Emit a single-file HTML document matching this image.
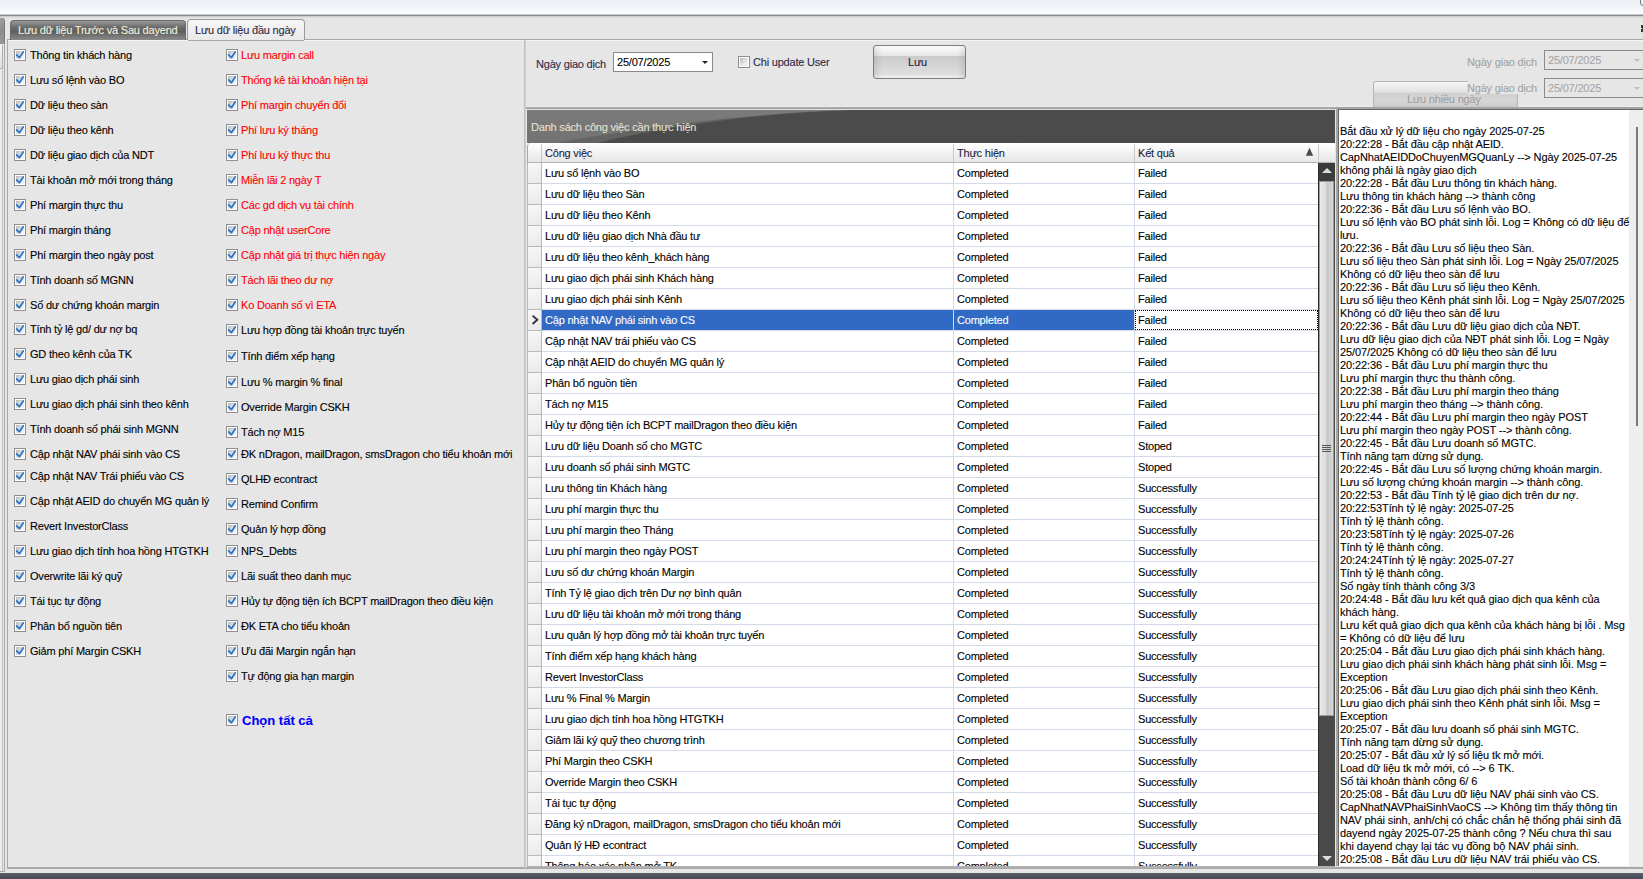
<!DOCTYPE html><html><head><meta charset="utf-8"><style>
*{margin:0;padding:0;box-sizing:border-box}
html,body{width:1643px;height:879px;overflow:hidden;background:#e6e6e6;font-family:"Liberation Sans", sans-serif;font-size:11px;color:#000;position:relative}
div{position:absolute}
.t{white-space:nowrap;line-height:13px;letter-spacing:-0.2px;-webkit-text-stroke:0.1px}
.cb{width:12px;height:12px}
.red{color:#ff0000}
.g{white-space:nowrap;line-height:13px;letter-spacing:-0.2px;color:#000;-webkit-text-stroke:0.1px}
</style></head><body><svg width="0" height="0" style="position:absolute"><defs><linearGradient id="cbg" x1="0" y1="0" x2="1" y2="1"><stop offset="0" stop-color="#b9b9b9"/><stop offset="0.6" stop-color="#e9e9e9"/><stop offset="1" stop-color="#f6f6f6"/></linearGradient></defs></svg>
<div style="left:0;top:0;width:1643px;height:14px;background:linear-gradient(#edf1f7,#f2f5f8 60%,#fdfdfe)"></div>
<div style="left:0;top:14px;width:1643px;height:1px;background:#c3cad4"></div>
<div style="left:0;top:15px;width:1643px;height:1px;background:#898989"></div>
<div style="left:0;top:16px;width:1643px;height:1px;background:#cdcdcd"></div>
<div style="left:0;top:17px;width:1643px;height:1px;background:#dedede"></div>
<div style="left:0;top:18px;width:5px;height:26px;border-radius:0 3px 0 0;background:linear-gradient(#a0a0a0,#8c8c8c 45%,#979797);border-right:1px solid #7a7a7a"></div>
<div style="left:0;top:44px;width:5px;height:828px;border-right:1px solid #a9a9a9;border-bottom:1px solid #a9a9a9"></div>
<div style="left:0;top:45px;width:3px;height:24px;background:linear-gradient(#f6f6f6,#dedede);border-right:1px solid #b0b0b0;border-bottom:1px solid #b0b0b0"></div>
<div style="left:0;top:70px;width:3px;height:801px;background:#ececec;border-right:1px solid #c0c0c0"></div>
<div style="left:7px;top:39px;width:1636px;height:830px;border-left:1px solid #a7a7a7;border-top:1px solid #a7a7a7;border-bottom:2px solid #a9a9a9"></div>
<div style="left:8px;top:40px;width:1635px;height:1px;background:#f4f4f4"></div>
<div style="left:10px;top:20px;width:176px;height:20px;border-radius:4px 4px 0 0;background:linear-gradient(#9a9a9a,#6e6e6e 30%,#5e5e5e 55%,#8a8a8a);border:1px solid #6a6a6a;border-bottom:none"></div>
<div class="t" style="left:18px;top:24px;color:#f4f1dc">Lưu dữ liệu Trước và Sau dayend</div>
<div style="left:187px;top:19px;width:118px;height:21px;border-radius:4px 4px 0 0;background:linear-gradient(#f6f6f6,#e9e9e9);border:1px solid #9a9a9a;border-bottom:none"></div>
<div style="left:188px;top:40px;width:116px;height:1px;background:#a8a8a8"></div>
<div class="t" style="left:195px;top:24px;color:#2a2a44">Lưu dữ liệu đầu ngày</div>
<div class="cb" style="left:14px;top:49px"><svg width="12" height="12" viewBox="0 0 12 12" style="position:absolute;left:0;top:0"><rect x="0.5" y="0.5" width="11" height="11" fill="#ffffff" stroke="#8e8e8e"/><rect x="2" y="2" width="8" height="8" fill="url(#cbg)"/><path d="M2.7 6 L5.4 8.7 L9.2 3" fill="none" stroke="#2d76c6" stroke-width="1.8" stroke-linecap="round" stroke-linejoin="round"/></svg></div>
<div class="t" style="left:30px;top:49px;">Thông tin khách hàng</div>
<div class="cb" style="left:14px;top:74px"><svg width="12" height="12" viewBox="0 0 12 12" style="position:absolute;left:0;top:0"><rect x="0.5" y="0.5" width="11" height="11" fill="#ffffff" stroke="#8e8e8e"/><rect x="2" y="2" width="8" height="8" fill="url(#cbg)"/><path d="M2.7 6 L5.4 8.7 L9.2 3" fill="none" stroke="#2d76c6" stroke-width="1.8" stroke-linecap="round" stroke-linejoin="round"/></svg></div>
<div class="t" style="left:30px;top:74px;">Lưu số lệnh vào BO</div>
<div class="cb" style="left:14px;top:99px"><svg width="12" height="12" viewBox="0 0 12 12" style="position:absolute;left:0;top:0"><rect x="0.5" y="0.5" width="11" height="11" fill="#ffffff" stroke="#8e8e8e"/><rect x="2" y="2" width="8" height="8" fill="url(#cbg)"/><path d="M2.7 6 L5.4 8.7 L9.2 3" fill="none" stroke="#2d76c6" stroke-width="1.8" stroke-linecap="round" stroke-linejoin="round"/></svg></div>
<div class="t" style="left:30px;top:99px;">Dữ liệu theo sàn</div>
<div class="cb" style="left:14px;top:124px"><svg width="12" height="12" viewBox="0 0 12 12" style="position:absolute;left:0;top:0"><rect x="0.5" y="0.5" width="11" height="11" fill="#ffffff" stroke="#8e8e8e"/><rect x="2" y="2" width="8" height="8" fill="url(#cbg)"/><path d="M2.7 6 L5.4 8.7 L9.2 3" fill="none" stroke="#2d76c6" stroke-width="1.8" stroke-linecap="round" stroke-linejoin="round"/></svg></div>
<div class="t" style="left:30px;top:124px;">Dữ liệu theo kênh</div>
<div class="cb" style="left:14px;top:149px"><svg width="12" height="12" viewBox="0 0 12 12" style="position:absolute;left:0;top:0"><rect x="0.5" y="0.5" width="11" height="11" fill="#ffffff" stroke="#8e8e8e"/><rect x="2" y="2" width="8" height="8" fill="url(#cbg)"/><path d="M2.7 6 L5.4 8.7 L9.2 3" fill="none" stroke="#2d76c6" stroke-width="1.8" stroke-linecap="round" stroke-linejoin="round"/></svg></div>
<div class="t" style="left:30px;top:149px;">Dữ liệu giao dịch của NDT</div>
<div class="cb" style="left:14px;top:174px"><svg width="12" height="12" viewBox="0 0 12 12" style="position:absolute;left:0;top:0"><rect x="0.5" y="0.5" width="11" height="11" fill="#ffffff" stroke="#8e8e8e"/><rect x="2" y="2" width="8" height="8" fill="url(#cbg)"/><path d="M2.7 6 L5.4 8.7 L9.2 3" fill="none" stroke="#2d76c6" stroke-width="1.8" stroke-linecap="round" stroke-linejoin="round"/></svg></div>
<div class="t" style="left:30px;top:174px;">Tài khoản mở mới trong tháng</div>
<div class="cb" style="left:14px;top:199px"><svg width="12" height="12" viewBox="0 0 12 12" style="position:absolute;left:0;top:0"><rect x="0.5" y="0.5" width="11" height="11" fill="#ffffff" stroke="#8e8e8e"/><rect x="2" y="2" width="8" height="8" fill="url(#cbg)"/><path d="M2.7 6 L5.4 8.7 L9.2 3" fill="none" stroke="#2d76c6" stroke-width="1.8" stroke-linecap="round" stroke-linejoin="round"/></svg></div>
<div class="t" style="left:30px;top:199px;">Phí margin thực thu</div>
<div class="cb" style="left:14px;top:224px"><svg width="12" height="12" viewBox="0 0 12 12" style="position:absolute;left:0;top:0"><rect x="0.5" y="0.5" width="11" height="11" fill="#ffffff" stroke="#8e8e8e"/><rect x="2" y="2" width="8" height="8" fill="url(#cbg)"/><path d="M2.7 6 L5.4 8.7 L9.2 3" fill="none" stroke="#2d76c6" stroke-width="1.8" stroke-linecap="round" stroke-linejoin="round"/></svg></div>
<div class="t" style="left:30px;top:224px;">Phí margin tháng</div>
<div class="cb" style="left:14px;top:249px"><svg width="12" height="12" viewBox="0 0 12 12" style="position:absolute;left:0;top:0"><rect x="0.5" y="0.5" width="11" height="11" fill="#ffffff" stroke="#8e8e8e"/><rect x="2" y="2" width="8" height="8" fill="url(#cbg)"/><path d="M2.7 6 L5.4 8.7 L9.2 3" fill="none" stroke="#2d76c6" stroke-width="1.8" stroke-linecap="round" stroke-linejoin="round"/></svg></div>
<div class="t" style="left:30px;top:249px;">Phí margin theo ngày post</div>
<div class="cb" style="left:14px;top:274px"><svg width="12" height="12" viewBox="0 0 12 12" style="position:absolute;left:0;top:0"><rect x="0.5" y="0.5" width="11" height="11" fill="#ffffff" stroke="#8e8e8e"/><rect x="2" y="2" width="8" height="8" fill="url(#cbg)"/><path d="M2.7 6 L5.4 8.7 L9.2 3" fill="none" stroke="#2d76c6" stroke-width="1.8" stroke-linecap="round" stroke-linejoin="round"/></svg></div>
<div class="t" style="left:30px;top:274px;">Tính doanh số MGNN</div>
<div class="cb" style="left:14px;top:299px"><svg width="12" height="12" viewBox="0 0 12 12" style="position:absolute;left:0;top:0"><rect x="0.5" y="0.5" width="11" height="11" fill="#ffffff" stroke="#8e8e8e"/><rect x="2" y="2" width="8" height="8" fill="url(#cbg)"/><path d="M2.7 6 L5.4 8.7 L9.2 3" fill="none" stroke="#2d76c6" stroke-width="1.8" stroke-linecap="round" stroke-linejoin="round"/></svg></div>
<div class="t" style="left:30px;top:299px;">Số dư chứng khoán margin</div>
<div class="cb" style="left:14px;top:323px"><svg width="12" height="12" viewBox="0 0 12 12" style="position:absolute;left:0;top:0"><rect x="0.5" y="0.5" width="11" height="11" fill="#ffffff" stroke="#8e8e8e"/><rect x="2" y="2" width="8" height="8" fill="url(#cbg)"/><path d="M2.7 6 L5.4 8.7 L9.2 3" fill="none" stroke="#2d76c6" stroke-width="1.8" stroke-linecap="round" stroke-linejoin="round"/></svg></div>
<div class="t" style="left:30px;top:323px;">Tính tỷ lệ gd/ dư nợ bq</div>
<div class="cb" style="left:14px;top:348px"><svg width="12" height="12" viewBox="0 0 12 12" style="position:absolute;left:0;top:0"><rect x="0.5" y="0.5" width="11" height="11" fill="#ffffff" stroke="#8e8e8e"/><rect x="2" y="2" width="8" height="8" fill="url(#cbg)"/><path d="M2.7 6 L5.4 8.7 L9.2 3" fill="none" stroke="#2d76c6" stroke-width="1.8" stroke-linecap="round" stroke-linejoin="round"/></svg></div>
<div class="t" style="left:30px;top:348px;">GD theo kênh của TK</div>
<div class="cb" style="left:14px;top:373px"><svg width="12" height="12" viewBox="0 0 12 12" style="position:absolute;left:0;top:0"><rect x="0.5" y="0.5" width="11" height="11" fill="#ffffff" stroke="#8e8e8e"/><rect x="2" y="2" width="8" height="8" fill="url(#cbg)"/><path d="M2.7 6 L5.4 8.7 L9.2 3" fill="none" stroke="#2d76c6" stroke-width="1.8" stroke-linecap="round" stroke-linejoin="round"/></svg></div>
<div class="t" style="left:30px;top:373px;">Lưu giao dịch phái sinh</div>
<div class="cb" style="left:14px;top:398px"><svg width="12" height="12" viewBox="0 0 12 12" style="position:absolute;left:0;top:0"><rect x="0.5" y="0.5" width="11" height="11" fill="#ffffff" stroke="#8e8e8e"/><rect x="2" y="2" width="8" height="8" fill="url(#cbg)"/><path d="M2.7 6 L5.4 8.7 L9.2 3" fill="none" stroke="#2d76c6" stroke-width="1.8" stroke-linecap="round" stroke-linejoin="round"/></svg></div>
<div class="t" style="left:30px;top:398px;">Lưu giao dịch phái sinh theo kênh</div>
<div class="cb" style="left:14px;top:423px"><svg width="12" height="12" viewBox="0 0 12 12" style="position:absolute;left:0;top:0"><rect x="0.5" y="0.5" width="11" height="11" fill="#ffffff" stroke="#8e8e8e"/><rect x="2" y="2" width="8" height="8" fill="url(#cbg)"/><path d="M2.7 6 L5.4 8.7 L9.2 3" fill="none" stroke="#2d76c6" stroke-width="1.8" stroke-linecap="round" stroke-linejoin="round"/></svg></div>
<div class="t" style="left:30px;top:423px;">Tính doanh số phái sinh MGNN</div>
<div class="cb" style="left:14px;top:448px"><svg width="12" height="12" viewBox="0 0 12 12" style="position:absolute;left:0;top:0"><rect x="0.5" y="0.5" width="11" height="11" fill="#ffffff" stroke="#8e8e8e"/><rect x="2" y="2" width="8" height="8" fill="url(#cbg)"/><path d="M2.7 6 L5.4 8.7 L9.2 3" fill="none" stroke="#2d76c6" stroke-width="1.8" stroke-linecap="round" stroke-linejoin="round"/></svg></div>
<div class="t" style="left:30px;top:448px;">Cập nhật NAV phái sinh vào CS</div>
<div class="cb" style="left:14px;top:470px"><svg width="12" height="12" viewBox="0 0 12 12" style="position:absolute;left:0;top:0"><rect x="0.5" y="0.5" width="11" height="11" fill="#ffffff" stroke="#8e8e8e"/><rect x="2" y="2" width="8" height="8" fill="url(#cbg)"/><path d="M2.7 6 L5.4 8.7 L9.2 3" fill="none" stroke="#2d76c6" stroke-width="1.8" stroke-linecap="round" stroke-linejoin="round"/></svg></div>
<div class="t" style="left:30px;top:470px;">Cập nhật NAV Trái phiếu vào CS</div>
<div class="cb" style="left:14px;top:495px"><svg width="12" height="12" viewBox="0 0 12 12" style="position:absolute;left:0;top:0"><rect x="0.5" y="0.5" width="11" height="11" fill="#ffffff" stroke="#8e8e8e"/><rect x="2" y="2" width="8" height="8" fill="url(#cbg)"/><path d="M2.7 6 L5.4 8.7 L9.2 3" fill="none" stroke="#2d76c6" stroke-width="1.8" stroke-linecap="round" stroke-linejoin="round"/></svg></div>
<div class="t" style="left:30px;top:495px;">Cập nhật AEID do chuyển MG quản lý</div>
<div class="cb" style="left:14px;top:520px"><svg width="12" height="12" viewBox="0 0 12 12" style="position:absolute;left:0;top:0"><rect x="0.5" y="0.5" width="11" height="11" fill="#ffffff" stroke="#8e8e8e"/><rect x="2" y="2" width="8" height="8" fill="url(#cbg)"/><path d="M2.7 6 L5.4 8.7 L9.2 3" fill="none" stroke="#2d76c6" stroke-width="1.8" stroke-linecap="round" stroke-linejoin="round"/></svg></div>
<div class="t" style="left:30px;top:520px;">Revert InvestorClass</div>
<div class="cb" style="left:14px;top:545px"><svg width="12" height="12" viewBox="0 0 12 12" style="position:absolute;left:0;top:0"><rect x="0.5" y="0.5" width="11" height="11" fill="#ffffff" stroke="#8e8e8e"/><rect x="2" y="2" width="8" height="8" fill="url(#cbg)"/><path d="M2.7 6 L5.4 8.7 L9.2 3" fill="none" stroke="#2d76c6" stroke-width="1.8" stroke-linecap="round" stroke-linejoin="round"/></svg></div>
<div class="t" style="left:30px;top:545px;">Lưu giao dịch tính hoa hồng HTGTKH</div>
<div class="cb" style="left:14px;top:570px"><svg width="12" height="12" viewBox="0 0 12 12" style="position:absolute;left:0;top:0"><rect x="0.5" y="0.5" width="11" height="11" fill="#ffffff" stroke="#8e8e8e"/><rect x="2" y="2" width="8" height="8" fill="url(#cbg)"/><path d="M2.7 6 L5.4 8.7 L9.2 3" fill="none" stroke="#2d76c6" stroke-width="1.8" stroke-linecap="round" stroke-linejoin="round"/></svg></div>
<div class="t" style="left:30px;top:570px;">Overwrite lãi ký quỹ</div>
<div class="cb" style="left:14px;top:595px"><svg width="12" height="12" viewBox="0 0 12 12" style="position:absolute;left:0;top:0"><rect x="0.5" y="0.5" width="11" height="11" fill="#ffffff" stroke="#8e8e8e"/><rect x="2" y="2" width="8" height="8" fill="url(#cbg)"/><path d="M2.7 6 L5.4 8.7 L9.2 3" fill="none" stroke="#2d76c6" stroke-width="1.8" stroke-linecap="round" stroke-linejoin="round"/></svg></div>
<div class="t" style="left:30px;top:595px;">Tái tục tự động</div>
<div class="cb" style="left:14px;top:620px"><svg width="12" height="12" viewBox="0 0 12 12" style="position:absolute;left:0;top:0"><rect x="0.5" y="0.5" width="11" height="11" fill="#ffffff" stroke="#8e8e8e"/><rect x="2" y="2" width="8" height="8" fill="url(#cbg)"/><path d="M2.7 6 L5.4 8.7 L9.2 3" fill="none" stroke="#2d76c6" stroke-width="1.8" stroke-linecap="round" stroke-linejoin="round"/></svg></div>
<div class="t" style="left:30px;top:620px;">Phân bổ nguồn tiên</div>
<div class="cb" style="left:14px;top:645px"><svg width="12" height="12" viewBox="0 0 12 12" style="position:absolute;left:0;top:0"><rect x="0.5" y="0.5" width="11" height="11" fill="#ffffff" stroke="#8e8e8e"/><rect x="2" y="2" width="8" height="8" fill="url(#cbg)"/><path d="M2.7 6 L5.4 8.7 L9.2 3" fill="none" stroke="#2d76c6" stroke-width="1.8" stroke-linecap="round" stroke-linejoin="round"/></svg></div>
<div class="t" style="left:30px;top:645px;">Giảm phí Margin CSKH</div>
<div class="cb" style="left:226px;top:49px"><svg width="12" height="12" viewBox="0 0 12 12" style="position:absolute;left:0;top:0"><rect x="0.5" y="0.5" width="11" height="11" fill="#ffffff" stroke="#8e8e8e"/><rect x="2" y="2" width="8" height="8" fill="url(#cbg)"/><path d="M2.7 6 L5.4 8.7 L9.2 3" fill="none" stroke="#2d76c6" stroke-width="1.8" stroke-linecap="round" stroke-linejoin="round"/></svg></div>
<div class="t red" style="left:241px;top:49px;">Lưu margin call</div>
<div class="cb" style="left:226px;top:74px"><svg width="12" height="12" viewBox="0 0 12 12" style="position:absolute;left:0;top:0"><rect x="0.5" y="0.5" width="11" height="11" fill="#ffffff" stroke="#8e8e8e"/><rect x="2" y="2" width="8" height="8" fill="url(#cbg)"/><path d="M2.7 6 L5.4 8.7 L9.2 3" fill="none" stroke="#2d76c6" stroke-width="1.8" stroke-linecap="round" stroke-linejoin="round"/></svg></div>
<div class="t red" style="left:241px;top:74px;">Thống kê tài khoản hiện tại</div>
<div class="cb" style="left:226px;top:99px"><svg width="12" height="12" viewBox="0 0 12 12" style="position:absolute;left:0;top:0"><rect x="0.5" y="0.5" width="11" height="11" fill="#ffffff" stroke="#8e8e8e"/><rect x="2" y="2" width="8" height="8" fill="url(#cbg)"/><path d="M2.7 6 L5.4 8.7 L9.2 3" fill="none" stroke="#2d76c6" stroke-width="1.8" stroke-linecap="round" stroke-linejoin="round"/></svg></div>
<div class="t red" style="left:241px;top:99px;">Phí margin chuyển đổi</div>
<div class="cb" style="left:226px;top:124px"><svg width="12" height="12" viewBox="0 0 12 12" style="position:absolute;left:0;top:0"><rect x="0.5" y="0.5" width="11" height="11" fill="#ffffff" stroke="#8e8e8e"/><rect x="2" y="2" width="8" height="8" fill="url(#cbg)"/><path d="M2.7 6 L5.4 8.7 L9.2 3" fill="none" stroke="#2d76c6" stroke-width="1.8" stroke-linecap="round" stroke-linejoin="round"/></svg></div>
<div class="t red" style="left:241px;top:124px;">Phí lưu ký tháng</div>
<div class="cb" style="left:226px;top:149px"><svg width="12" height="12" viewBox="0 0 12 12" style="position:absolute;left:0;top:0"><rect x="0.5" y="0.5" width="11" height="11" fill="#ffffff" stroke="#8e8e8e"/><rect x="2" y="2" width="8" height="8" fill="url(#cbg)"/><path d="M2.7 6 L5.4 8.7 L9.2 3" fill="none" stroke="#2d76c6" stroke-width="1.8" stroke-linecap="round" stroke-linejoin="round"/></svg></div>
<div class="t red" style="left:241px;top:149px;">Phí lưu ký thực thu</div>
<div class="cb" style="left:226px;top:174px"><svg width="12" height="12" viewBox="0 0 12 12" style="position:absolute;left:0;top:0"><rect x="0.5" y="0.5" width="11" height="11" fill="#ffffff" stroke="#8e8e8e"/><rect x="2" y="2" width="8" height="8" fill="url(#cbg)"/><path d="M2.7 6 L5.4 8.7 L9.2 3" fill="none" stroke="#2d76c6" stroke-width="1.8" stroke-linecap="round" stroke-linejoin="round"/></svg></div>
<div class="t red" style="left:241px;top:174px;">Miễn lãi 2 ngày T</div>
<div class="cb" style="left:226px;top:199px"><svg width="12" height="12" viewBox="0 0 12 12" style="position:absolute;left:0;top:0"><rect x="0.5" y="0.5" width="11" height="11" fill="#ffffff" stroke="#8e8e8e"/><rect x="2" y="2" width="8" height="8" fill="url(#cbg)"/><path d="M2.7 6 L5.4 8.7 L9.2 3" fill="none" stroke="#2d76c6" stroke-width="1.8" stroke-linecap="round" stroke-linejoin="round"/></svg></div>
<div class="t red" style="left:241px;top:199px;">Các gd dịch vụ tài chính</div>
<div class="cb" style="left:226px;top:224px"><svg width="12" height="12" viewBox="0 0 12 12" style="position:absolute;left:0;top:0"><rect x="0.5" y="0.5" width="11" height="11" fill="#ffffff" stroke="#8e8e8e"/><rect x="2" y="2" width="8" height="8" fill="url(#cbg)"/><path d="M2.7 6 L5.4 8.7 L9.2 3" fill="none" stroke="#2d76c6" stroke-width="1.8" stroke-linecap="round" stroke-linejoin="round"/></svg></div>
<div class="t red" style="left:241px;top:224px;">Cập nhật userCore</div>
<div class="cb" style="left:226px;top:249px"><svg width="12" height="12" viewBox="0 0 12 12" style="position:absolute;left:0;top:0"><rect x="0.5" y="0.5" width="11" height="11" fill="#ffffff" stroke="#8e8e8e"/><rect x="2" y="2" width="8" height="8" fill="url(#cbg)"/><path d="M2.7 6 L5.4 8.7 L9.2 3" fill="none" stroke="#2d76c6" stroke-width="1.8" stroke-linecap="round" stroke-linejoin="round"/></svg></div>
<div class="t red" style="left:241px;top:249px;">Cập nhật giá trị thực hiện ngày</div>
<div class="cb" style="left:226px;top:274px"><svg width="12" height="12" viewBox="0 0 12 12" style="position:absolute;left:0;top:0"><rect x="0.5" y="0.5" width="11" height="11" fill="#ffffff" stroke="#8e8e8e"/><rect x="2" y="2" width="8" height="8" fill="url(#cbg)"/><path d="M2.7 6 L5.4 8.7 L9.2 3" fill="none" stroke="#2d76c6" stroke-width="1.8" stroke-linecap="round" stroke-linejoin="round"/></svg></div>
<div class="t red" style="left:241px;top:274px;">Tách lãi theo dư nợ</div>
<div class="cb" style="left:226px;top:299px"><svg width="12" height="12" viewBox="0 0 12 12" style="position:absolute;left:0;top:0"><rect x="0.5" y="0.5" width="11" height="11" fill="#ffffff" stroke="#8e8e8e"/><rect x="2" y="2" width="8" height="8" fill="url(#cbg)"/><path d="M2.7 6 L5.4 8.7 L9.2 3" fill="none" stroke="#2d76c6" stroke-width="1.8" stroke-linecap="round" stroke-linejoin="round"/></svg></div>
<div class="t red" style="left:241px;top:299px;">Ko Doanh số vì ETA</div>
<div class="cb" style="left:226px;top:324px"><svg width="12" height="12" viewBox="0 0 12 12" style="position:absolute;left:0;top:0"><rect x="0.5" y="0.5" width="11" height="11" fill="#ffffff" stroke="#8e8e8e"/><rect x="2" y="2" width="8" height="8" fill="url(#cbg)"/><path d="M2.7 6 L5.4 8.7 L9.2 3" fill="none" stroke="#2d76c6" stroke-width="1.8" stroke-linecap="round" stroke-linejoin="round"/></svg></div>
<div class="t" style="left:241px;top:324px;">Lưu hợp đồng tài khoản trực tuyến</div>
<div class="cb" style="left:226px;top:350px"><svg width="12" height="12" viewBox="0 0 12 12" style="position:absolute;left:0;top:0"><rect x="0.5" y="0.5" width="11" height="11" fill="#ffffff" stroke="#8e8e8e"/><rect x="2" y="2" width="8" height="8" fill="url(#cbg)"/><path d="M2.7 6 L5.4 8.7 L9.2 3" fill="none" stroke="#2d76c6" stroke-width="1.8" stroke-linecap="round" stroke-linejoin="round"/></svg></div>
<div class="t" style="left:241px;top:350px;">Tính điểm xếp hạng</div>
<div class="cb" style="left:226px;top:376px"><svg width="12" height="12" viewBox="0 0 12 12" style="position:absolute;left:0;top:0"><rect x="0.5" y="0.5" width="11" height="11" fill="#ffffff" stroke="#8e8e8e"/><rect x="2" y="2" width="8" height="8" fill="url(#cbg)"/><path d="M2.7 6 L5.4 8.7 L9.2 3" fill="none" stroke="#2d76c6" stroke-width="1.8" stroke-linecap="round" stroke-linejoin="round"/></svg></div>
<div class="t" style="left:241px;top:376px;">Lưu % margin % final</div>
<div class="cb" style="left:226px;top:401px"><svg width="12" height="12" viewBox="0 0 12 12" style="position:absolute;left:0;top:0"><rect x="0.5" y="0.5" width="11" height="11" fill="#ffffff" stroke="#8e8e8e"/><rect x="2" y="2" width="8" height="8" fill="url(#cbg)"/><path d="M2.7 6 L5.4 8.7 L9.2 3" fill="none" stroke="#2d76c6" stroke-width="1.8" stroke-linecap="round" stroke-linejoin="round"/></svg></div>
<div class="t" style="left:241px;top:401px;">Override Margin CSKH</div>
<div class="cb" style="left:226px;top:426px"><svg width="12" height="12" viewBox="0 0 12 12" style="position:absolute;left:0;top:0"><rect x="0.5" y="0.5" width="11" height="11" fill="#ffffff" stroke="#8e8e8e"/><rect x="2" y="2" width="8" height="8" fill="url(#cbg)"/><path d="M2.7 6 L5.4 8.7 L9.2 3" fill="none" stroke="#2d76c6" stroke-width="1.8" stroke-linecap="round" stroke-linejoin="round"/></svg></div>
<div class="t" style="left:241px;top:426px;">Tách nợ M15</div>
<div class="cb" style="left:226px;top:448px"><svg width="12" height="12" viewBox="0 0 12 12" style="position:absolute;left:0;top:0"><rect x="0.5" y="0.5" width="11" height="11" fill="#ffffff" stroke="#8e8e8e"/><rect x="2" y="2" width="8" height="8" fill="url(#cbg)"/><path d="M2.7 6 L5.4 8.7 L9.2 3" fill="none" stroke="#2d76c6" stroke-width="1.8" stroke-linecap="round" stroke-linejoin="round"/></svg></div>
<div class="t" style="left:241px;top:448px;">ĐK nDragon, mailDragon, smsDragon cho tiểu khoản mới</div>
<div class="cb" style="left:226px;top:473px"><svg width="12" height="12" viewBox="0 0 12 12" style="position:absolute;left:0;top:0"><rect x="0.5" y="0.5" width="11" height="11" fill="#ffffff" stroke="#8e8e8e"/><rect x="2" y="2" width="8" height="8" fill="url(#cbg)"/><path d="M2.7 6 L5.4 8.7 L9.2 3" fill="none" stroke="#2d76c6" stroke-width="1.8" stroke-linecap="round" stroke-linejoin="round"/></svg></div>
<div class="t" style="left:241px;top:473px;">QLHĐ econtract</div>
<div class="cb" style="left:226px;top:498px"><svg width="12" height="12" viewBox="0 0 12 12" style="position:absolute;left:0;top:0"><rect x="0.5" y="0.5" width="11" height="11" fill="#ffffff" stroke="#8e8e8e"/><rect x="2" y="2" width="8" height="8" fill="url(#cbg)"/><path d="M2.7 6 L5.4 8.7 L9.2 3" fill="none" stroke="#2d76c6" stroke-width="1.8" stroke-linecap="round" stroke-linejoin="round"/></svg></div>
<div class="t" style="left:241px;top:498px;">Remind Confirm</div>
<div class="cb" style="left:226px;top:523px"><svg width="12" height="12" viewBox="0 0 12 12" style="position:absolute;left:0;top:0"><rect x="0.5" y="0.5" width="11" height="11" fill="#ffffff" stroke="#8e8e8e"/><rect x="2" y="2" width="8" height="8" fill="url(#cbg)"/><path d="M2.7 6 L5.4 8.7 L9.2 3" fill="none" stroke="#2d76c6" stroke-width="1.8" stroke-linecap="round" stroke-linejoin="round"/></svg></div>
<div class="t" style="left:241px;top:523px;">Quản lý hợp đồng</div>
<div class="cb" style="left:226px;top:545px"><svg width="12" height="12" viewBox="0 0 12 12" style="position:absolute;left:0;top:0"><rect x="0.5" y="0.5" width="11" height="11" fill="#ffffff" stroke="#8e8e8e"/><rect x="2" y="2" width="8" height="8" fill="url(#cbg)"/><path d="M2.7 6 L5.4 8.7 L9.2 3" fill="none" stroke="#2d76c6" stroke-width="1.8" stroke-linecap="round" stroke-linejoin="round"/></svg></div>
<div class="t" style="left:241px;top:545px;">NPS_Debts</div>
<div class="cb" style="left:226px;top:570px"><svg width="12" height="12" viewBox="0 0 12 12" style="position:absolute;left:0;top:0"><rect x="0.5" y="0.5" width="11" height="11" fill="#ffffff" stroke="#8e8e8e"/><rect x="2" y="2" width="8" height="8" fill="url(#cbg)"/><path d="M2.7 6 L5.4 8.7 L9.2 3" fill="none" stroke="#2d76c6" stroke-width="1.8" stroke-linecap="round" stroke-linejoin="round"/></svg></div>
<div class="t" style="left:241px;top:570px;">Lãi suất theo danh mục</div>
<div class="cb" style="left:226px;top:595px"><svg width="12" height="12" viewBox="0 0 12 12" style="position:absolute;left:0;top:0"><rect x="0.5" y="0.5" width="11" height="11" fill="#ffffff" stroke="#8e8e8e"/><rect x="2" y="2" width="8" height="8" fill="url(#cbg)"/><path d="M2.7 6 L5.4 8.7 L9.2 3" fill="none" stroke="#2d76c6" stroke-width="1.8" stroke-linecap="round" stroke-linejoin="round"/></svg></div>
<div class="t" style="left:241px;top:595px;">Hủy tự động tiện ích BCPT mailDragon theo điều kiện</div>
<div class="cb" style="left:226px;top:620px"><svg width="12" height="12" viewBox="0 0 12 12" style="position:absolute;left:0;top:0"><rect x="0.5" y="0.5" width="11" height="11" fill="#ffffff" stroke="#8e8e8e"/><rect x="2" y="2" width="8" height="8" fill="url(#cbg)"/><path d="M2.7 6 L5.4 8.7 L9.2 3" fill="none" stroke="#2d76c6" stroke-width="1.8" stroke-linecap="round" stroke-linejoin="round"/></svg></div>
<div class="t" style="left:241px;top:620px;">ĐK ETA cho tiểu khoản</div>
<div class="cb" style="left:226px;top:645px"><svg width="12" height="12" viewBox="0 0 12 12" style="position:absolute;left:0;top:0"><rect x="0.5" y="0.5" width="11" height="11" fill="#ffffff" stroke="#8e8e8e"/><rect x="2" y="2" width="8" height="8" fill="url(#cbg)"/><path d="M2.7 6 L5.4 8.7 L9.2 3" fill="none" stroke="#2d76c6" stroke-width="1.8" stroke-linecap="round" stroke-linejoin="round"/></svg></div>
<div class="t" style="left:241px;top:645px;">Ưu đãi Margin ngắn hạn</div>
<div class="cb" style="left:226px;top:670px"><svg width="12" height="12" viewBox="0 0 12 12" style="position:absolute;left:0;top:0"><rect x="0.5" y="0.5" width="11" height="11" fill="#ffffff" stroke="#8e8e8e"/><rect x="2" y="2" width="8" height="8" fill="url(#cbg)"/><path d="M2.7 6 L5.4 8.7 L9.2 3" fill="none" stroke="#2d76c6" stroke-width="1.8" stroke-linecap="round" stroke-linejoin="round"/></svg></div>
<div class="t" style="left:241px;top:670px;">Tự động gia hạn margin</div>
<div class="cb" style="left:226px;top:714px"><svg width="12" height="12" viewBox="0 0 12 12" style="position:absolute;left:0;top:0"><rect x="0.5" y="0.5" width="11" height="11" fill="#ffffff" stroke="#8e8e8e"/><rect x="2" y="2" width="8" height="8" fill="url(#cbg)"/><path d="M2.7 6 L5.4 8.7 L9.2 3" fill="none" stroke="#2d76c6" stroke-width="1.8" stroke-linecap="round" stroke-linejoin="round"/></svg></div>
<div class="t" style="left:242px;top:714px;font-weight:bold;font-size:13px;color:#0000ff;letter-spacing:0">Chọn tất cả</div>
<div style="left:524px;top:40px;width:2px;height:828px;background:linear-gradient(90deg,#b8b8b8,#d6d6d6)"></div>
<div style="left:526px;top:106px;width:1117px;height:1px;background:#ebebeb"></div>
<div style="left:526px;top:107px;width:1117px;height:2px;background:linear-gradient(#b0b0b0,#9c9c9c)"></div>
<div style="left:526px;top:109px;width:1117px;height:1px;background:#e0e0e0"></div>
<div class="t" style="left:536px;top:58px;color:#2a2a48">Ngày giao dịch</div>
<div style="left:613px;top:52px;width:100px;height:20px;background:#fff;border:1px solid #8a8a8a"></div>
<div class="t" style="left:617px;top:56px;color:#000">25/07/2025</div>
<div style="left:702px;top:61px;width:0;height:0;border-left:3px solid transparent;border-right:3px solid transparent;border-top:3px solid #222"></div>
<div class="cb" style="left:738px;top:56px"><svg width="12" height="12" viewBox="0 0 12 12" style="position:absolute;left:0;top:0"><rect x="0.5" y="0.5" width="11" height="11" fill="#ffffff" stroke="#8e8e8e"/><rect x="2" y="2" width="8" height="8" fill="url(#cbg)"/></svg></div>
<div class="t" style="left:753px;top:56px;color:#2a2a48">Chi update User</div>
<div style="left:873px;top:45px;width:93px;height:34px;border:1px solid #7c7c7c;border-radius:3px;background:linear-gradient(#fefefe,#f2f2f2 5px,#e4e4e4 10px,#cbcbcb 10px,#d5d5d5 20px,#dedede 28px,#f2f2f2 32px);box-shadow:inset 8px 0 6px -5px rgba(0,0,0,0.10),inset -8px 0 6px -5px rgba(0,0,0,0.10)"></div>
<div class="t" style="left:908px;top:56px;color:#1e1e3a">Lưu</div>
<div class="t" style="left:1467px;top:56px;color:#a3a3a3">Ngày giao dịch</div>
<div style="left:1544px;top:50px;width:110px;height:20px;border:1px solid #8a8a8a;background:#e6e6e6"></div>
<div class="t" style="left:1548px;top:54px;color:#a6a6a6">25/07/2025</div>
<div style="left:1634px;top:59px;width:0;height:0;border-left:3px solid transparent;border-right:3px solid transparent;border-top:3px solid #bdbdbd"></div>
<div style="left:1373px;top:81px;width:145px;height:27px;border:1px solid #b4b4b4;border-bottom:none;border-radius:3px 3px 0 0;background:linear-gradient(#f6f6f6,#e2e2e2 40%,#cfcfcf 41%,#d6d6d6 70%,#c9c9c9)"></div>
<div class="t" style="left:1407px;top:93px;color:#a0a0a0">Lưu nhiều ngày</div>
<div style="left:1468px;top:80px;width:71px;height:14px;background:#e6e6e6"></div>
<div class="t" style="left:1467px;top:82px;color:#a3a3a3">Ngày giao dịch</div>
<div style="left:1544px;top:78px;width:110px;height:20px;border:1px solid #8a8a8a;background:#e6e6e6"></div>
<div class="t" style="left:1548px;top:82px;color:#a6a6a6">25/07/2025</div>
<div style="left:1634px;top:87px;width:0;height:0;border-left:3px solid transparent;border-right:3px solid transparent;border-top:3px solid #bdbdbd"></div>
<div style="left:1641px;top:25px;width:2px;height:3px;background:#353535"></div>
<div style="left:1642px;top:28px;width:1px;height:1px;background:#555"></div>
<div style="left:1641px;top:29px;width:2px;height:3px;background:#353535"></div>
<div style="left:1640px;top:-4px;width:8px;height:10px;border:1px solid #7a7a7a;border-radius:3px"></div>
<div style="left:527px;top:110px;width:808px;height:33px;background:#4b4b4b;overflow:hidden"><svg width="808" height="33" style="position:absolute;left:0;top:0"><defs><linearGradient id="capg" x1="0" y1="0" x2="0" y2="1"><stop offset="0" stop-color="#7b7b7b"/><stop offset="1" stop-color="#727272"/></linearGradient></defs><path d="M0 0 H325 C 230 3, 130 18, 71 33 H0 Z" fill="#636363"/><path d="M0 0 H323 C 230 2, 110 18, 30 33 H0 Z" fill="url(#capg)"/></svg></div>
<div class="t" style="left:531px;top:121px;color:#e6e2cf">Danh sách công việc cần thực hiện</div>
<div style="left:527px;top:143px;width:808px;height:723px;background:#fff"></div>
<div style="left:527px;top:143px;width:808px;height:20px;border-radius:4px 4px 0 0;background:linear-gradient(#ffffff,#f3f3f3 50%,#e6e6e6);border-bottom:1px solid #b5b5b5;border-left:1px solid #a9a9a9"></div>
<div style="left:541px;top:144px;width:1px;height:18px;background:#c9c9c9"></div>
<div style="left:953px;top:144px;width:1px;height:18px;background:#c9c9c9"></div>
<div style="left:1134px;top:144px;width:1px;height:18px;background:#c9c9c9"></div>
<div style="left:1318px;top:144px;width:1px;height:18px;background:#c9c9c9"></div>
<div class="t" style="left:545px;top:147px;color:#1e1e3a">Công việc</div>
<div class="t" style="left:957px;top:147px;color:#1e1e3a">Thực hiện</div>
<div class="t" style="left:1138px;top:147px;color:#1e1e3a">Kết quả</div>
<div style="left:1305px;top:147px;width:9px;height:10px"><svg width="9" height="10"><polygon points="0.8,8.8 4.5,0.8 8.2,8.8" fill="#4a4a4a"/></svg></div>
<div style="left:527px;top:163px;width:791px;height:703px;overflow:hidden">
<div style="left:0px;top:0px;width:15px;height:21px;background:linear-gradient(160deg,#f8f8f8,#e9e9e9);border-left:1px solid #b9b9b9;border-bottom:1px solid #b9b9b9;border-right:1px solid #b9b9b9"></div>
<div style="left:15px;top:20px;width:776px;height:1px;background:#d3dbe8"></div>
<div class="g" style="left:18px;top:4px;color:#000">Lưu sổ lệnh vào BO</div>
<div class="g" style="left:430px;top:4px;color:#000">Completed</div>
<div class="g" style="left:611px;top:4px;">Failed</div>
<div style="left:0px;top:21px;width:15px;height:21px;background:linear-gradient(160deg,#f8f8f8,#e9e9e9);border-left:1px solid #b9b9b9;border-bottom:1px solid #b9b9b9;border-right:1px solid #b9b9b9"></div>
<div style="left:15px;top:41px;width:776px;height:1px;background:#d3dbe8"></div>
<div class="g" style="left:18px;top:25px;color:#000">Lưu dữ liệu theo Sàn</div>
<div class="g" style="left:430px;top:25px;color:#000">Completed</div>
<div class="g" style="left:611px;top:25px;">Failed</div>
<div style="left:0px;top:42px;width:15px;height:21px;background:linear-gradient(160deg,#f8f8f8,#e9e9e9);border-left:1px solid #b9b9b9;border-bottom:1px solid #b9b9b9;border-right:1px solid #b9b9b9"></div>
<div style="left:15px;top:62px;width:776px;height:1px;background:#d3dbe8"></div>
<div class="g" style="left:18px;top:46px;color:#000">Lưu dữ liệu theo Kênh</div>
<div class="g" style="left:430px;top:46px;color:#000">Completed</div>
<div class="g" style="left:611px;top:46px;">Failed</div>
<div style="left:0px;top:63px;width:15px;height:21px;background:linear-gradient(160deg,#f8f8f8,#e9e9e9);border-left:1px solid #b9b9b9;border-bottom:1px solid #b9b9b9;border-right:1px solid #b9b9b9"></div>
<div style="left:15px;top:83px;width:776px;height:1px;background:#d3dbe8"></div>
<div class="g" style="left:18px;top:67px;color:#000">Lưu dữ liệu giao dịch Nhà đầu tư</div>
<div class="g" style="left:430px;top:67px;color:#000">Completed</div>
<div class="g" style="left:611px;top:67px;">Failed</div>
<div style="left:0px;top:84px;width:15px;height:21px;background:linear-gradient(160deg,#f8f8f8,#e9e9e9);border-left:1px solid #b9b9b9;border-bottom:1px solid #b9b9b9;border-right:1px solid #b9b9b9"></div>
<div style="left:15px;top:104px;width:776px;height:1px;background:#d3dbe8"></div>
<div class="g" style="left:18px;top:88px;color:#000">Lưu dữ liệu theo kênh_khách hàng</div>
<div class="g" style="left:430px;top:88px;color:#000">Completed</div>
<div class="g" style="left:611px;top:88px;">Failed</div>
<div style="left:0px;top:105px;width:15px;height:21px;background:linear-gradient(160deg,#f8f8f8,#e9e9e9);border-left:1px solid #b9b9b9;border-bottom:1px solid #b9b9b9;border-right:1px solid #b9b9b9"></div>
<div style="left:15px;top:125px;width:776px;height:1px;background:#d3dbe8"></div>
<div class="g" style="left:18px;top:109px;color:#000">Lưu giao dịch phái sinh Khách hàng</div>
<div class="g" style="left:430px;top:109px;color:#000">Completed</div>
<div class="g" style="left:611px;top:109px;">Failed</div>
<div style="left:0px;top:126px;width:15px;height:21px;background:linear-gradient(160deg,#f8f8f8,#e9e9e9);border-left:1px solid #b9b9b9;border-bottom:1px solid #b9b9b9;border-right:1px solid #b9b9b9"></div>
<div style="left:15px;top:146px;width:776px;height:1px;background:#d3dbe8"></div>
<div class="g" style="left:18px;top:130px;color:#000">Lưu giao dịch phái sinh Kênh</div>
<div class="g" style="left:430px;top:130px;color:#000">Completed</div>
<div class="g" style="left:611px;top:130px;">Failed</div>
<div style="left:0px;top:147px;width:15px;height:21px;background:linear-gradient(160deg,#f8f8f8,#e9e9e9);border-left:1px solid #b9b9b9;border-bottom:1px solid #b9b9b9;border-right:1px solid #b9b9b9"></div>
<div style="left:15px;top:147px;width:592px;height:20px;background:#316ac5"></div>
<div style="left:608px;top:147px;width:183px;height:20px;border:1px dotted #000;background:#fff"></div>
<div style="left:4px;top:151px;width:9px;height:12px"><svg width="9" height="12"><path d="M1.6 1.6 L6.3 5.8 L1.6 10" fill="none" stroke="#333" stroke-width="1.9"/></svg></div>
<div style="left:15px;top:167px;width:776px;height:1px;background:#d3dbe8"></div>
<div class="g" style="left:18px;top:151px;color:#fff">Cập nhật NAV phái sinh vào CS</div>
<div class="g" style="left:430px;top:151px;color:#fff">Completed</div>
<div class="g" style="left:611px;top:151px;">Failed</div>
<div style="left:0px;top:168px;width:15px;height:21px;background:linear-gradient(160deg,#f8f8f8,#e9e9e9);border-left:1px solid #b9b9b9;border-bottom:1px solid #b9b9b9;border-right:1px solid #b9b9b9"></div>
<div style="left:15px;top:188px;width:776px;height:1px;background:#d3dbe8"></div>
<div class="g" style="left:18px;top:172px;color:#000">Cập nhật NAV trái phiếu vào CS</div>
<div class="g" style="left:430px;top:172px;color:#000">Completed</div>
<div class="g" style="left:611px;top:172px;">Failed</div>
<div style="left:0px;top:189px;width:15px;height:21px;background:linear-gradient(160deg,#f8f8f8,#e9e9e9);border-left:1px solid #b9b9b9;border-bottom:1px solid #b9b9b9;border-right:1px solid #b9b9b9"></div>
<div style="left:15px;top:209px;width:776px;height:1px;background:#d3dbe8"></div>
<div class="g" style="left:18px;top:193px;color:#000">Cập nhật AEID do chuyển MG quản lý</div>
<div class="g" style="left:430px;top:193px;color:#000">Completed</div>
<div class="g" style="left:611px;top:193px;">Failed</div>
<div style="left:0px;top:210px;width:15px;height:21px;background:linear-gradient(160deg,#f8f8f8,#e9e9e9);border-left:1px solid #b9b9b9;border-bottom:1px solid #b9b9b9;border-right:1px solid #b9b9b9"></div>
<div style="left:15px;top:230px;width:776px;height:1px;background:#d3dbe8"></div>
<div class="g" style="left:18px;top:214px;color:#000">Phân bổ nguồn tiền</div>
<div class="g" style="left:430px;top:214px;color:#000">Completed</div>
<div class="g" style="left:611px;top:214px;">Failed</div>
<div style="left:0px;top:231px;width:15px;height:21px;background:linear-gradient(160deg,#f8f8f8,#e9e9e9);border-left:1px solid #b9b9b9;border-bottom:1px solid #b9b9b9;border-right:1px solid #b9b9b9"></div>
<div style="left:15px;top:251px;width:776px;height:1px;background:#d3dbe8"></div>
<div class="g" style="left:18px;top:235px;color:#000">Tách nợ M15</div>
<div class="g" style="left:430px;top:235px;color:#000">Completed</div>
<div class="g" style="left:611px;top:235px;">Failed</div>
<div style="left:0px;top:252px;width:15px;height:21px;background:linear-gradient(160deg,#f8f8f8,#e9e9e9);border-left:1px solid #b9b9b9;border-bottom:1px solid #b9b9b9;border-right:1px solid #b9b9b9"></div>
<div style="left:15px;top:272px;width:776px;height:1px;background:#d3dbe8"></div>
<div class="g" style="left:18px;top:256px;color:#000">Hủy tự động tiện ích BCPT mailDragon theo điều kiện</div>
<div class="g" style="left:430px;top:256px;color:#000">Completed</div>
<div class="g" style="left:611px;top:256px;">Failed</div>
<div style="left:0px;top:273px;width:15px;height:21px;background:linear-gradient(160deg,#f8f8f8,#e9e9e9);border-left:1px solid #b9b9b9;border-bottom:1px solid #b9b9b9;border-right:1px solid #b9b9b9"></div>
<div style="left:15px;top:293px;width:776px;height:1px;background:#d3dbe8"></div>
<div class="g" style="left:18px;top:277px;color:#000">Lưu dữ liệu Doanh số cho MGTC</div>
<div class="g" style="left:430px;top:277px;color:#000">Completed</div>
<div class="g" style="left:611px;top:277px;">Stoped</div>
<div style="left:0px;top:294px;width:15px;height:21px;background:linear-gradient(160deg,#f8f8f8,#e9e9e9);border-left:1px solid #b9b9b9;border-bottom:1px solid #b9b9b9;border-right:1px solid #b9b9b9"></div>
<div style="left:15px;top:314px;width:776px;height:1px;background:#d3dbe8"></div>
<div class="g" style="left:18px;top:298px;color:#000">Lưu doanh số phái sinh MGTC</div>
<div class="g" style="left:430px;top:298px;color:#000">Completed</div>
<div class="g" style="left:611px;top:298px;">Stoped</div>
<div style="left:0px;top:315px;width:15px;height:21px;background:linear-gradient(160deg,#f8f8f8,#e9e9e9);border-left:1px solid #b9b9b9;border-bottom:1px solid #b9b9b9;border-right:1px solid #b9b9b9"></div>
<div style="left:15px;top:335px;width:776px;height:1px;background:#d3dbe8"></div>
<div class="g" style="left:18px;top:319px;color:#000">Lưu thông tin Khách hàng</div>
<div class="g" style="left:430px;top:319px;color:#000">Completed</div>
<div class="g" style="left:611px;top:319px;">Successfully</div>
<div style="left:0px;top:336px;width:15px;height:21px;background:linear-gradient(160deg,#f8f8f8,#e9e9e9);border-left:1px solid #b9b9b9;border-bottom:1px solid #b9b9b9;border-right:1px solid #b9b9b9"></div>
<div style="left:15px;top:356px;width:776px;height:1px;background:#d3dbe8"></div>
<div class="g" style="left:18px;top:340px;color:#000">Lưu phí margin thực thu</div>
<div class="g" style="left:430px;top:340px;color:#000">Completed</div>
<div class="g" style="left:611px;top:340px;">Successfully</div>
<div style="left:0px;top:357px;width:15px;height:21px;background:linear-gradient(160deg,#f8f8f8,#e9e9e9);border-left:1px solid #b9b9b9;border-bottom:1px solid #b9b9b9;border-right:1px solid #b9b9b9"></div>
<div style="left:15px;top:377px;width:776px;height:1px;background:#d3dbe8"></div>
<div class="g" style="left:18px;top:361px;color:#000">Lưu phí margin theo Tháng</div>
<div class="g" style="left:430px;top:361px;color:#000">Completed</div>
<div class="g" style="left:611px;top:361px;">Successfully</div>
<div style="left:0px;top:378px;width:15px;height:21px;background:linear-gradient(160deg,#f8f8f8,#e9e9e9);border-left:1px solid #b9b9b9;border-bottom:1px solid #b9b9b9;border-right:1px solid #b9b9b9"></div>
<div style="left:15px;top:398px;width:776px;height:1px;background:#d3dbe8"></div>
<div class="g" style="left:18px;top:382px;color:#000">Lưu phí margin theo ngày POST</div>
<div class="g" style="left:430px;top:382px;color:#000">Completed</div>
<div class="g" style="left:611px;top:382px;">Successfully</div>
<div style="left:0px;top:399px;width:15px;height:21px;background:linear-gradient(160deg,#f8f8f8,#e9e9e9);border-left:1px solid #b9b9b9;border-bottom:1px solid #b9b9b9;border-right:1px solid #b9b9b9"></div>
<div style="left:15px;top:419px;width:776px;height:1px;background:#d3dbe8"></div>
<div class="g" style="left:18px;top:403px;color:#000">Lưu số dư chứng khoán Margin</div>
<div class="g" style="left:430px;top:403px;color:#000">Completed</div>
<div class="g" style="left:611px;top:403px;">Successfully</div>
<div style="left:0px;top:420px;width:15px;height:21px;background:linear-gradient(160deg,#f8f8f8,#e9e9e9);border-left:1px solid #b9b9b9;border-bottom:1px solid #b9b9b9;border-right:1px solid #b9b9b9"></div>
<div style="left:15px;top:440px;width:776px;height:1px;background:#d3dbe8"></div>
<div class="g" style="left:18px;top:424px;color:#000">Tính Tỷ lệ giao dịch trên Dư nợ bình quân</div>
<div class="g" style="left:430px;top:424px;color:#000">Completed</div>
<div class="g" style="left:611px;top:424px;">Successfully</div>
<div style="left:0px;top:441px;width:15px;height:21px;background:linear-gradient(160deg,#f8f8f8,#e9e9e9);border-left:1px solid #b9b9b9;border-bottom:1px solid #b9b9b9;border-right:1px solid #b9b9b9"></div>
<div style="left:15px;top:461px;width:776px;height:1px;background:#d3dbe8"></div>
<div class="g" style="left:18px;top:445px;color:#000">Lưu dữ liệu tài khoản mở mới trong tháng</div>
<div class="g" style="left:430px;top:445px;color:#000">Completed</div>
<div class="g" style="left:611px;top:445px;">Successfully</div>
<div style="left:0px;top:462px;width:15px;height:21px;background:linear-gradient(160deg,#f8f8f8,#e9e9e9);border-left:1px solid #b9b9b9;border-bottom:1px solid #b9b9b9;border-right:1px solid #b9b9b9"></div>
<div style="left:15px;top:482px;width:776px;height:1px;background:#d3dbe8"></div>
<div class="g" style="left:18px;top:466px;color:#000">Lưu quản lý hợp đồng mở tài khoản trực tuyến</div>
<div class="g" style="left:430px;top:466px;color:#000">Completed</div>
<div class="g" style="left:611px;top:466px;">Successfully</div>
<div style="left:0px;top:483px;width:15px;height:21px;background:linear-gradient(160deg,#f8f8f8,#e9e9e9);border-left:1px solid #b9b9b9;border-bottom:1px solid #b9b9b9;border-right:1px solid #b9b9b9"></div>
<div style="left:15px;top:503px;width:776px;height:1px;background:#d3dbe8"></div>
<div class="g" style="left:18px;top:487px;color:#000">Tính điểm xếp hạng khách hàng</div>
<div class="g" style="left:430px;top:487px;color:#000">Completed</div>
<div class="g" style="left:611px;top:487px;">Successfully</div>
<div style="left:0px;top:504px;width:15px;height:21px;background:linear-gradient(160deg,#f8f8f8,#e9e9e9);border-left:1px solid #b9b9b9;border-bottom:1px solid #b9b9b9;border-right:1px solid #b9b9b9"></div>
<div style="left:15px;top:524px;width:776px;height:1px;background:#d3dbe8"></div>
<div class="g" style="left:18px;top:508px;color:#000">Revert InvestorClass</div>
<div class="g" style="left:430px;top:508px;color:#000">Completed</div>
<div class="g" style="left:611px;top:508px;">Successfully</div>
<div style="left:0px;top:525px;width:15px;height:21px;background:linear-gradient(160deg,#f8f8f8,#e9e9e9);border-left:1px solid #b9b9b9;border-bottom:1px solid #b9b9b9;border-right:1px solid #b9b9b9"></div>
<div style="left:15px;top:545px;width:776px;height:1px;background:#d3dbe8"></div>
<div class="g" style="left:18px;top:529px;color:#000">Lưu % Final % Margin</div>
<div class="g" style="left:430px;top:529px;color:#000">Completed</div>
<div class="g" style="left:611px;top:529px;">Successfully</div>
<div style="left:0px;top:546px;width:15px;height:21px;background:linear-gradient(160deg,#f8f8f8,#e9e9e9);border-left:1px solid #b9b9b9;border-bottom:1px solid #b9b9b9;border-right:1px solid #b9b9b9"></div>
<div style="left:15px;top:566px;width:776px;height:1px;background:#d3dbe8"></div>
<div class="g" style="left:18px;top:550px;color:#000">Lưu giao dịch tính hoa hồng HTGTKH</div>
<div class="g" style="left:430px;top:550px;color:#000">Completed</div>
<div class="g" style="left:611px;top:550px;">Successfully</div>
<div style="left:0px;top:567px;width:15px;height:21px;background:linear-gradient(160deg,#f8f8f8,#e9e9e9);border-left:1px solid #b9b9b9;border-bottom:1px solid #b9b9b9;border-right:1px solid #b9b9b9"></div>
<div style="left:15px;top:587px;width:776px;height:1px;background:#d3dbe8"></div>
<div class="g" style="left:18px;top:571px;color:#000">Giảm lãi ký quỹ theo chương trình</div>
<div class="g" style="left:430px;top:571px;color:#000">Completed</div>
<div class="g" style="left:611px;top:571px;">Successfully</div>
<div style="left:0px;top:588px;width:15px;height:21px;background:linear-gradient(160deg,#f8f8f8,#e9e9e9);border-left:1px solid #b9b9b9;border-bottom:1px solid #b9b9b9;border-right:1px solid #b9b9b9"></div>
<div style="left:15px;top:608px;width:776px;height:1px;background:#d3dbe8"></div>
<div class="g" style="left:18px;top:592px;color:#000">Phí Margin theo CSKH</div>
<div class="g" style="left:430px;top:592px;color:#000">Completed</div>
<div class="g" style="left:611px;top:592px;">Successfully</div>
<div style="left:0px;top:609px;width:15px;height:21px;background:linear-gradient(160deg,#f8f8f8,#e9e9e9);border-left:1px solid #b9b9b9;border-bottom:1px solid #b9b9b9;border-right:1px solid #b9b9b9"></div>
<div style="left:15px;top:629px;width:776px;height:1px;background:#d3dbe8"></div>
<div class="g" style="left:18px;top:613px;color:#000">Override Margin theo CSKH</div>
<div class="g" style="left:430px;top:613px;color:#000">Completed</div>
<div class="g" style="left:611px;top:613px;">Successfully</div>
<div style="left:0px;top:630px;width:15px;height:21px;background:linear-gradient(160deg,#f8f8f8,#e9e9e9);border-left:1px solid #b9b9b9;border-bottom:1px solid #b9b9b9;border-right:1px solid #b9b9b9"></div>
<div style="left:15px;top:650px;width:776px;height:1px;background:#d3dbe8"></div>
<div class="g" style="left:18px;top:634px;color:#000">Tái tục tự động</div>
<div class="g" style="left:430px;top:634px;color:#000">Completed</div>
<div class="g" style="left:611px;top:634px;">Successfully</div>
<div style="left:0px;top:651px;width:15px;height:21px;background:linear-gradient(160deg,#f8f8f8,#e9e9e9);border-left:1px solid #b9b9b9;border-bottom:1px solid #b9b9b9;border-right:1px solid #b9b9b9"></div>
<div style="left:15px;top:671px;width:776px;height:1px;background:#d3dbe8"></div>
<div class="g" style="left:18px;top:655px;color:#000">Đăng ký nDragon, mailDragon, smsDragon cho tiểu khoản mới</div>
<div class="g" style="left:430px;top:655px;color:#000">Completed</div>
<div class="g" style="left:611px;top:655px;">Successfully</div>
<div style="left:0px;top:672px;width:15px;height:21px;background:linear-gradient(160deg,#f8f8f8,#e9e9e9);border-left:1px solid #b9b9b9;border-bottom:1px solid #b9b9b9;border-right:1px solid #b9b9b9"></div>
<div style="left:15px;top:692px;width:776px;height:1px;background:#d3dbe8"></div>
<div class="g" style="left:18px;top:676px;color:#000">Quản lý HĐ econtract</div>
<div class="g" style="left:430px;top:676px;color:#000">Completed</div>
<div class="g" style="left:611px;top:676px;">Successfully</div>
<div style="left:0px;top:693px;width:15px;height:21px;background:linear-gradient(160deg,#f8f8f8,#e9e9e9);border-left:1px solid #b9b9b9;border-bottom:1px solid #b9b9b9;border-right:1px solid #b9b9b9"></div>
<div style="left:15px;top:713px;width:776px;height:1px;background:#d3dbe8"></div>
<div class="g" style="left:18px;top:697px;color:#000">Thông báo xác nhận mở TK</div>
<div class="g" style="left:430px;top:697px;color:#000">Completed</div>
<div class="g" style="left:611px;top:697px;">Successfully</div>
<div style="left:426px;top:0px;width:1px;height:703px;background:#d3dbe8"></div>
<div style="left:607px;top:0px;width:1px;height:703px;background:#d3dbe8"></div>
</div>
<div style="left:1318px;top:163px;width:17px;height:703px;background:#4a4a4a;border-left:1px solid #2a2a2a"></div>
<div style="left:1319px;top:163px;width:16px;height:18px;background:#3c3c3c"></div>
<div style="left:1322px;top:168px;width:0;height:0;border-left:5px solid transparent;border-right:5px solid transparent;border-bottom:5px solid #dcdcdc"></div>
<div style="left:1319px;top:181px;width:15px;height:535px;background:linear-gradient(90deg,#e9e9e9,#dcdcdc 45%,#c6c6c6 55%,#d8d8d8);border:1px solid #9a9a9a"></div>
<div style="left:1322px;top:445px;width:9px;height:1px;background:#555"></div>
<div style="left:1322px;top:447px;width:9px;height:1px;background:#555"></div>
<div style="left:1322px;top:449px;width:9px;height:1px;background:#555"></div>
<div style="left:1322px;top:451px;width:9px;height:1px;background:#555"></div>
<div style="left:1322px;top:856px;width:0;height:0;border-left:5px solid transparent;border-right:5px solid transparent;border-top:5px solid #dcdcdc"></div>
<div style="left:527px;top:866px;width:808px;height:2px;background:#b0b0b0"></div>
<div style="left:1336px;top:107px;width:307px;height:759px;background:#fff;border-left:2px solid #a6a6a6;border-top:2px solid #a4a4a4"></div>
<div style="left:1338px;top:109px;width:305px;height:757px;background:#fff;border-left:1px solid #666;border-top:1px solid #666"></div>
<div style="left:1629px;top:110px;width:14px;height:756px;background:#eeeeee"></div>
<div style="left:1636px;top:127px;width:2px;height:299px;background:#7a7a7a"></div>
<div class="g" style="left:1340px;top:125px;letter-spacing:-0.1px">Bắt đầu xử lý dữ liệu cho ngày 2025-07-25</div>
<div class="g" style="left:1340px;top:138px;letter-spacing:-0.1px">20:22:28 - Bắt đầu cập nhật AEID.</div>
<div class="g" style="left:1340px;top:151px;letter-spacing:-0.1px">CapNhatAEIDDoChuyenMGQuanLy --&gt; Ngày 2025-07-25</div>
<div class="g" style="left:1340px;top:164px;letter-spacing:-0.1px">không phải là ngày giao dịch</div>
<div class="g" style="left:1340px;top:177px;letter-spacing:-0.1px">20:22:28 - Bắt đầu Lưu thông tin khách hàng.</div>
<div class="g" style="left:1340px;top:190px;letter-spacing:-0.1px">Lưu thông tin khách hàng --&gt; thành công</div>
<div class="g" style="left:1340px;top:203px;letter-spacing:-0.1px">20:22:36 - Bắt đầu Lưu số lệnh vào BO.</div>
<div class="g" style="left:1340px;top:216px;letter-spacing:-0.1px">Lưu số lệnh vào BO phát sinh lỗi. Log = Không có dữ liệu để</div>
<div class="g" style="left:1340px;top:229px;letter-spacing:-0.1px">lưu.</div>
<div class="g" style="left:1340px;top:242px;letter-spacing:-0.1px">20:22:36 - Bắt đầu Lưu số liệu theo Sàn.</div>
<div class="g" style="left:1340px;top:255px;letter-spacing:-0.1px">Lưu số liệu theo Sàn phát sinh lỗi. Log = Ngày 25/07/2025</div>
<div class="g" style="left:1340px;top:268px;letter-spacing:-0.1px">Không có dữ liệu theo sàn để lưu</div>
<div class="g" style="left:1340px;top:281px;letter-spacing:-0.1px">20:22:36 - Bắt đầu Lưu số liệu theo Kênh.</div>
<div class="g" style="left:1340px;top:294px;letter-spacing:-0.1px">Lưu số liệu theo Kênh phát sinh lỗi. Log = Ngày 25/07/2025</div>
<div class="g" style="left:1340px;top:307px;letter-spacing:-0.1px">Không có dữ liệu theo sàn để lưu</div>
<div class="g" style="left:1340px;top:320px;letter-spacing:-0.1px">20:22:36 - Bắt đầu Lưu dữ liệu giao dịch của NĐT.</div>
<div class="g" style="left:1340px;top:333px;letter-spacing:-0.1px">Lưu dữ liệu giao dịch của NĐT phát sinh lỗi. Log = Ngày</div>
<div class="g" style="left:1340px;top:346px;letter-spacing:-0.1px">25/07/2025 Không có dữ liệu theo sàn để lưu</div>
<div class="g" style="left:1340px;top:359px;letter-spacing:-0.1px">20:22:36 - Bắt đầu Lưu phí margin thực thu</div>
<div class="g" style="left:1340px;top:372px;letter-spacing:-0.1px">Lưu phí margin thực thu thành công.</div>
<div class="g" style="left:1340px;top:385px;letter-spacing:-0.1px">20:22:38 - Bắt đầu Lưu phí margin theo tháng</div>
<div class="g" style="left:1340px;top:398px;letter-spacing:-0.1px">Lưu phí margin theo tháng --&gt; thành công.</div>
<div class="g" style="left:1340px;top:411px;letter-spacing:-0.1px">20:22:44 - Bắt đầu Lưu phí margin theo ngày POST</div>
<div class="g" style="left:1340px;top:424px;letter-spacing:-0.1px">Lưu phí margin theo ngày POST --&gt; thành công.</div>
<div class="g" style="left:1340px;top:437px;letter-spacing:-0.1px">20:22:45 - Bắt đầu Lưu doanh số MGTC.</div>
<div class="g" style="left:1340px;top:450px;letter-spacing:-0.1px">Tính năng tạm dừng sử dụng.</div>
<div class="g" style="left:1340px;top:463px;letter-spacing:-0.1px">20:22:45 - Bắt đầu Lưu số lượng chứng khoán margin.</div>
<div class="g" style="left:1340px;top:476px;letter-spacing:-0.1px">Lưu số lượng chứng khoán margin --&gt; thành công.</div>
<div class="g" style="left:1340px;top:489px;letter-spacing:-0.1px">20:22:53 - Bắt đầu Tính tỷ lệ giao dịch trên dư nợ.</div>
<div class="g" style="left:1340px;top:502px;letter-spacing:-0.1px">20:22:53Tính tỷ lệ ngày: 2025-07-25</div>
<div class="g" style="left:1340px;top:515px;letter-spacing:-0.1px">Tính tỷ lệ thành công.</div>
<div class="g" style="left:1340px;top:528px;letter-spacing:-0.1px">20:23:58Tính tỷ lệ ngày: 2025-07-26</div>
<div class="g" style="left:1340px;top:541px;letter-spacing:-0.1px">Tính tỷ lệ thành công.</div>
<div class="g" style="left:1340px;top:554px;letter-spacing:-0.1px">20:24:24Tính tỷ lệ ngày: 2025-07-27</div>
<div class="g" style="left:1340px;top:567px;letter-spacing:-0.1px">Tính tỷ lệ thành công.</div>
<div class="g" style="left:1340px;top:580px;letter-spacing:-0.1px">Số ngày tính thành công 3/3</div>
<div class="g" style="left:1340px;top:593px;letter-spacing:-0.1px">20:24:48 - Bắt đầu lưu kết quả giao dịch qua kênh của</div>
<div class="g" style="left:1340px;top:606px;letter-spacing:-0.1px">khách hàng.</div>
<div class="g" style="left:1340px;top:619px;letter-spacing:-0.1px">Lưu kết quả giao dịch qua kênh của khách hàng bị lỗi . Msg</div>
<div class="g" style="left:1340px;top:632px;letter-spacing:-0.1px">= Không có dữ liệu để lưu</div>
<div class="g" style="left:1340px;top:645px;letter-spacing:-0.1px">20:25:04 - Bắt đầu Lưu giao dịch phái sinh khách hàng.</div>
<div class="g" style="left:1340px;top:658px;letter-spacing:-0.1px">Lưu giao dịch phái sinh khách hàng phát sinh lỗi. Msg =</div>
<div class="g" style="left:1340px;top:671px;letter-spacing:-0.1px">Exception</div>
<div class="g" style="left:1340px;top:684px;letter-spacing:-0.1px">20:25:06 - Bắt đầu Lưu giao dịch phái sinh theo Kênh.</div>
<div class="g" style="left:1340px;top:697px;letter-spacing:-0.1px">Lưu giao dịch phái sinh theo Kênh phát sinh lỗi. Msg =</div>
<div class="g" style="left:1340px;top:710px;letter-spacing:-0.1px">Exception</div>
<div class="g" style="left:1340px;top:723px;letter-spacing:-0.1px">20:25:07 - Bắt đầu lưu doanh số phái sinh MGTC.</div>
<div class="g" style="left:1340px;top:736px;letter-spacing:-0.1px">Tính năng tạm dừng sử dụng.</div>
<div class="g" style="left:1340px;top:749px;letter-spacing:-0.1px">20:25:07 - Bắt đầu xử lý số liệu tk mở mới.</div>
<div class="g" style="left:1340px;top:762px;letter-spacing:-0.1px">Load dữ liệu tk mở mới, có --&gt; 6 TK.</div>
<div class="g" style="left:1340px;top:775px;letter-spacing:-0.1px">Số tài khoản thành công 6/ 6</div>
<div class="g" style="left:1340px;top:788px;letter-spacing:-0.1px">20:25:08 - Bắt đầu Lưu dữ liệu NAV phái sinh vào CS.</div>
<div class="g" style="left:1340px;top:801px;letter-spacing:-0.1px">CapNhatNAVPhaiSinhVaoCS --&gt; Không tìm thấy thông tin</div>
<div class="g" style="left:1340px;top:814px;letter-spacing:-0.1px">NAV phái sinh, anh/chị có chắc chắn hệ thống phái sinh đã</div>
<div class="g" style="left:1340px;top:827px;letter-spacing:-0.1px">dayend ngày 2025-07-25 thành công ? Nếu chưa thì sau</div>
<div class="g" style="left:1340px;top:840px;letter-spacing:-0.1px">khi dayend chạy lại tác vụ đồng bộ NAV phái sinh.</div>
<div class="g" style="left:1340px;top:853px;letter-spacing:-0.1px">20:25:08 - Bắt đầu Lưu dữ liệu NAV trái phiếu vào CS.</div>
<div style="left:0;top:873px;width:1643px;height:6px;background:linear-gradient(#5b5f6b,#454955)"></div></body></html>
